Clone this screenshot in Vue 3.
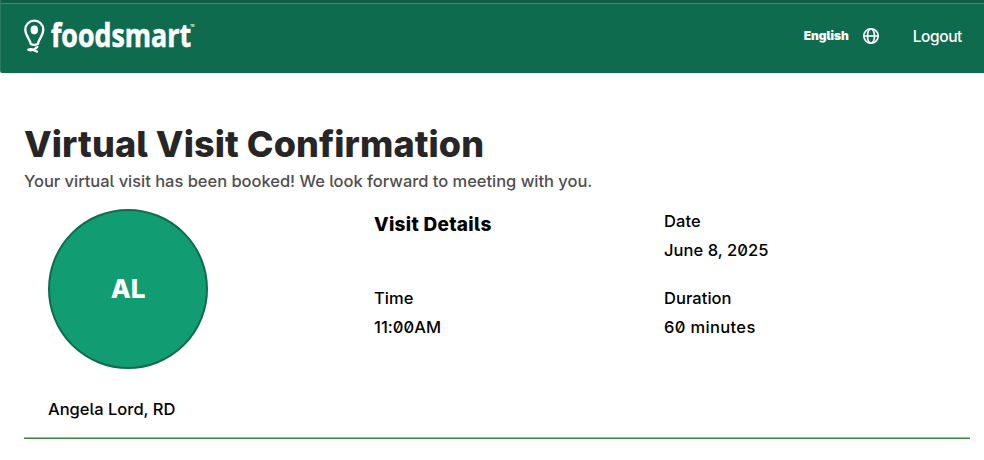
<script setup>
const initials = "AL";
const provider = "Angela Lord, RD";

const details = [
    { key: "date", label: "Date", value: "June 8, 2025" },
    { key: "time", label: "Time", value: "11:00AM" },
    { key: "duration", label: "Duration", value: "60 minutes" },
];
</script>

<template>
    <div class="page">
        <header class="top-bar">
            <svg
                class="logo"
                width="174"
                height="40"
                viewBox="0 0 174 40"
                role="img"
                aria-label="foodsmart"
            >
                <path
                    d="M6.8 26C5.6 20.6 1.3 17.5 1.3 11.6A9 9 0 0 1 19.3 11.6C19.3 17.5 15 20.6 13.8 26C11.5 27.2 9 27.2 6.8 26Z"
                    fill="none"
                    stroke="#fff"
                    stroke-width="2.3"
                />
                <ellipse cx="10.3" cy="12" rx="3.7" ry="4.4" fill="#fff" />
                <path
                    d="M2.8 31.4C5.3 29.6 8.2 29.6 9.8 30.6C10.5 28.9 12 27.7 14.6 27.9C14.2 30 12.9 31.3 11.3 31.5L14.2 33L13.4 35L8.8 33C6.5 33.8 4.2 33.4 2.8 31.4Z"
                    fill="#fff"
                />
                <text
                    class="logo-text"
                    x="27"
                    y="29.3"
                    textLength="140"
                    lengthAdjust="spacingAndGlyphs"
                >foodsmart</text>
                <text
                    class="logo-mark"
                    x="166.3"
                    y="9"
                    textLength="4"
                    lengthAdjust="spacingAndGlyphs"
                >TM</text>
            </svg>

            <nav class="actions">
                <a class="language">
                    <span class="language-name">English</span>
                    <svg
                        width="18"
                        height="18"
                        viewBox="0 0 18 18"
                        fill="none"
                        stroke="#fff"
                        stroke-width="1.6"
                    >
                        <circle cx="9" cy="9" r="7.2" />
                        <ellipse cx="9" cy="9" rx="3.5" ry="7.2" />
                        <path d="M1.7 9H16.3" />
                    </svg>
                </a>
                <a class="logout">Logout</a>
            </nav>
        </header>

        <main class="content">
            <h1 class="title">Virtual Visit Confirmation</h1>
            <p class="subtitle">
                Your virtual visit has been booked! We look forward to meeting
                with you.
            </p>

            <section class="visit">
                <div class="provider">
                    <div class="avatar">
                        <span class="initials">{{ initials }}</span>
                    </div>
                    <p class="provider-name">{{ provider }}</p>
                </div>

                <div class="details">
                    <h2 class="details-title">Visit Details</h2>
                    <div
                        v-for="item in details"
                        :key="item.key"
                        class="detail"
                        :class="item.key"
                    >
                        <p class="detail-label">{{ item.label }}</p>
                        <p class="detail-value">{{ item.value }}</p>
                    </div>
                </div>
            </section>
        </main>
    </div>
</template>

<style>
body {
    margin: 0;
    background: #ffffff;
}
</style>

<style scoped>
.page {
    height: 460px;
    overflow: hidden;
    color: #000000;
    font-family: Inter, "Liberation Sans", sans-serif;
    font-size: 16.5px;
    font-weight: 450;
    font-feature-settings: "zero", "cv05";
}

.top-bar {
    box-sizing: border-box;
    height: 73px;
    display: flex;
    align-items: flex-start;
    justify-content: space-between;
    padding: 15px 22px 0 23px;
    border-left: 1px solid #2b7a60;
    border-bottom-left-radius: 2px;
    background: linear-gradient(
        #0d5f45 0 3px,
        #3c8a70 3px 4px,
        #0f6b4e 4px
    );
    color: #ffffff;
}

.logo {
    display: block;
    margin-top: 3px;
    overflow: visible;
}

.logo-text {
    fill: #ffffff;
    stroke: #ffffff;
    stroke-width: 0.6px;
    font-family: "Open Sans", sans-serif;
    font-size: 32px;
    font-weight: 700;
}

.logo-mark {
    fill: #ffffff;
    font-size: 4px;
    font-weight: 700;
}

.actions,
.language {
    display: flex;
    align-items: center;
}

.actions {
    height: 42px;
    gap: 33px;
}

.language {
    gap: 13px;
}

.language-name {
    position: relative;
    top: -1px;
    font-size: 12px;
    font-weight: 900;
    letter-spacing: -0.05px;
}

.logout {
    font-size: 15.5px;
    letter-spacing: -0.4px;
}

.content {
    padding: 47px 14px 0 24px;
}

.title,
.subtitle,
.provider-name,
.details-title,
.detail-label,
.detail-value {
    margin: 0;
    white-space: nowrap;
}

.title {
    color: #262626;
    font-size: 36px;
    font-weight: 800;
    letter-spacing: 0.1px;
    line-height: 48px;
}

.subtitle {
    color: #4f4f4f;
    letter-spacing: -0.03px;
    line-height: 26px;
}

.visit {
    height: 244px;
    display: flex;
    padding: 0 0 0 24px;
    border-bottom: 1px solid #3f8b43;
    box-shadow: inset 0 -1px 0 #a3aea4;
}

.provider {
    width: 326px;
    padding-top: 15px;
}

.avatar {
    box-sizing: border-box;
    width: 160px;
    height: 160px;
    display: grid;
    place-items: center;
    border: 2px solid #0f6b4e;
    border-radius: 50%;
    background: #119c72;
}

.initials {
    color: #ffffff;
    font-size: 26px;
    font-weight: 800;
    line-height: 30px;
}

.provider-name {
    margin-top: 28px;
    line-height: 24px;
}

.details {
    display: grid;
    grid-template-columns: 290px 1fr;
    grid-template-rows: 77px 77px;
    padding-top: 13px;
}

.details-title {
    padding-top: 4px;
    font-size: 19px;
    font-weight: 800;
    letter-spacing: 0.3px;
    line-height: 28px;
}

.detail {
    letter-spacing: 0.05px;
    line-height: 29px;
}

.duration .detail-value {
    letter-spacing: 0.35px;
}
</style>
